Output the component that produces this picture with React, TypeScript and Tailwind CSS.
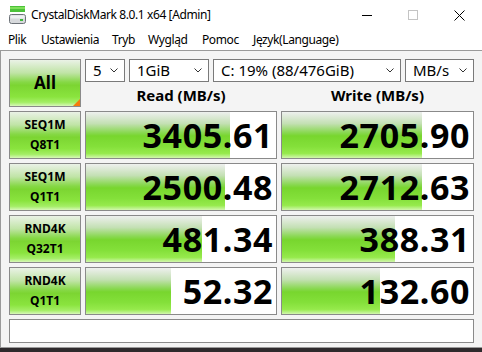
import React from "react";

const ui = "font-['Segoe_UI','Noto_Sans',sans-serif]";

const greenFill =
  "bg-[linear-gradient(to_bottom,#eef0ee_0%,#c4e0b4_25%,#88d850_45%,#78d62e_52%,#84e03a_75%,#96ea4c_90%,#d2f7ae_100%)]";
const labelFill =
  "bg-[linear-gradient(to_bottom,#eaf2e6_0%,#c0e4a6_28%,#86d846_48%,#7cd532_55%,#8ae43e_80%,#a4ee66_92%,#d8f8ba_100%)]";

interface Result {
  line1: string;
  line2: string;
  read: string;
  readFill: number;
  write: string;
  writeFill: number;
}

const results: Result[] = [
  { line1: "SEQ1M", line2: "Q8T1", read: "3405.61", readFill: 144, write: "2705.90", writeFill: 140 },
  { line1: "SEQ1M", line2: "Q1T1", read: "2500.48", readFill: 139, write: "2712.63", writeFill: 140 },
  { line1: "RND4K", line2: "Q32T1", read: "481.34", readFill: 116, write: "388.31", writeFill: 113 },
  { line1: "RND4K", line2: "Q1T1", read: "52.32", readFill: 85, write: "132.60", writeFill: 98 },
];

function Chevron() {
  return (
    <svg width="8" height="5" viewBox="0 0 8 5" className="shrink-0">
      <path d="M0.5 0.5 L4 4 L7.5 0.5" fill="none" stroke="#333" strokeWidth="1" />
    </svg>
  );
}

function Combo({ value, width }: { value: string; width: string }) {
  return (
    <div
      className={`${width} h-[23px] bg-white border border-[#7a7a7a] flex items-center justify-between pl-[7px] pr-[6px] text-[15px] text-black`}
    >
      <span className="whitespace-nowrap">{value}</span>
      <Chevron />
    </div>
  );
}

function Score({ value, fill }: { value: string; fill: number }) {
  return (
    <div className="relative h-[48px] bg-white border border-[#8a8a8a] overflow-hidden">
      <div className={`absolute left-0 top-0 bottom-0 ${greenFill}`} style={{ width: fill }} />
      <div className="relative h-full flex items-center justify-end pr-[3px] text-[34px] tracking-[0.6px] font-bold text-black leading-none">
        {value}
      </div>
    </div>
  );
}

function AppIcon() {
  return (
    <svg width="17" height="18" viewBox="0 0 17 18">
      <rect x="1" y="0" width="15" height="6" fill="#4cc23a" />
      <rect x="1" y="1" width="15" height="2" fill="#7fe05a" />
      <rect x="0.5" y="8.5" width="16" height="9" rx="2" fill="#d7d9dc" stroke="#6d7278" />
      <rect x="1.5" y="9.5" width="14" height="3" fill="#eef0f2" />
      <rect x="11" y="13" width="3" height="2" fill="#3db83a" />
    </svg>
  );
}

export default function App() {
  return (
    <div className={`w-[482px] h-[352px] bg-[#2e2a2c] flex flex-col overflow-hidden ${ui}`}>
      {/* title bar */}
      <div className="h-[30px] bg-white flex items-center shrink-0">
        <div className="pl-[9px] pr-[5px] flex items-center">
          <AppIcon />
        </div>
        <span className="text-[12px] tracking-[-0.4px] text-black whitespace-nowrap">
          CrystalDiskMark 8.0.1 x64 [Admin]
        </span>
        <div className="ml-auto flex h-full">
          <div className="w-[46px] flex items-center justify-center">
            <div className="w-[10px] h-px bg-black" />
          </div>
          <div className="w-[46px] flex items-center justify-center">
            <div className="w-[10px] h-[10px] border border-[#c4c4c4]" />
          </div>
          <div className="w-[46px] flex items-center justify-center">
            <svg width="11" height="11" viewBox="0 0 11 11">
              <path d="M0.5 0.5 L10.5 10.5 M10.5 0.5 L0.5 10.5" stroke="#000" strokeWidth="1" />
            </svg>
          </div>
        </div>
      </div>

      {/* menu bar */}
      <div className="h-[20px] bg-white flex items-center pl-[8px] text-[12px] tracking-[-0.4px] text-black shrink-0">
        <span className="w-[33px]">Plik</span>
        <span className="w-[71px]">Ustawienia</span>
        <span className="w-[36px]">Tryb</span>
        <span className="w-[54px]">Wygląd</span>
        <span className="w-[51px]">Pomoc</span>
        <span>Język(Language)</span>
      </div>

      {/* main */}
      <div className="flex-1 bg-[#f4f4f4] border-t border-l border-b border-[#9a9a9a] pl-[8px] pt-[8px] pb-[4px] flex flex-col gap-[4px]">
        <div className="grid grid-cols-[72px_192px_193px] gap-x-[4px] gap-y-[4px]">
          <div
            className={`relative h-[48px] border border-[#8a8a8a] ${labelFill} flex items-center justify-center text-[17px] font-bold text-black`}
          >
            All
            <div className="absolute right-0 bottom-0 w-0 h-0 border-l-[7px] border-l-transparent border-b-[7px] border-b-[#f57b0c]" />
          </div>
          <div className="col-span-2 h-[48px] flex flex-col">
            <div className="flex gap-[4px]">
              <Combo value="5" width="w-[40px]" />
              <Combo value="1GiB" width="w-[80px]" />
              <Combo value="C: 19% (88/476GiB)" width="w-[188px]" />
              <Combo value="MB/s" width="w-[69px]" />
            </div>
            <div className="flex-1 grid grid-cols-[192px_193px] gap-x-[4px] items-center text-[15px] font-bold text-black pt-px">
              <div className="text-center">Read (MB/s)</div>
              <div className="text-center">Write (MB/s)</div>
            </div>
          </div>

          {results.map((r) => (
            <React.Fragment key={r.line1 + r.line2}>
              <div
                className={`h-[48px] border border-[#8a8a8a] ${labelFill} flex flex-col items-center justify-center text-[12px] font-bold text-black leading-[20px]`}
              >
                <span>{r.line1}</span>
                <span>{r.line2}</span>
              </div>
              <Score value={r.read} fill={r.readFill} />
              <Score value={r.write} fill={r.writeFill} />
            </React.Fragment>
          ))}
        </div>
        <div className="w-[465px] h-[24px] bg-white border border-[#8a8a8a]" />
      </div>
      <div className="h-[4px] shrink-0" />
    </div>
  );
}
